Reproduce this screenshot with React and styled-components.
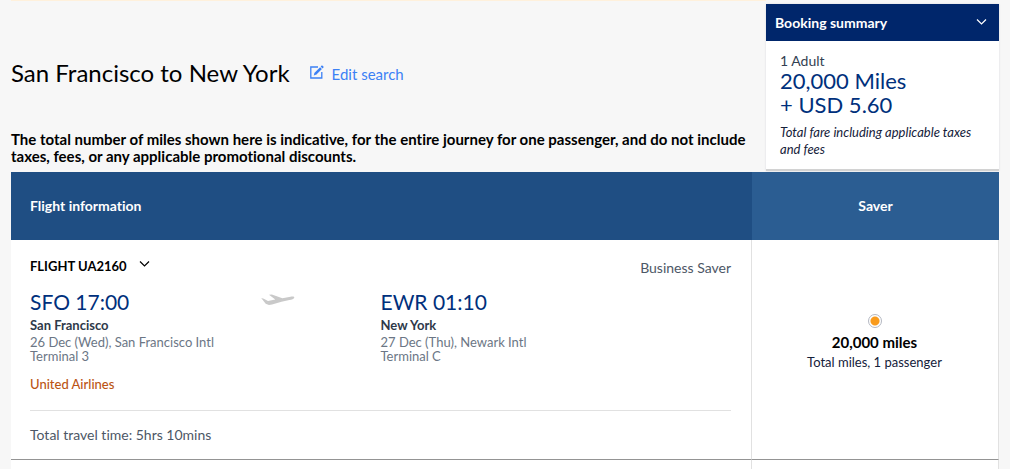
import React from "react";
import styled, { createGlobalStyle } from "styled-components";

const sans = `Lato, "Open Sans", "Liberation Sans", sans-serif`;
const display = `Lato, "Open Sans", sans-serif`;

const GlobalStyle = createGlobalStyle`
  *, *::before, *::after { box-sizing: border-box; }
  body {
    margin: 0;
    background: #f7f7f7;
    color: #000a1f;
    font-family: ${sans};
    font-size: 14px;
    font-variant-ligatures: none;
  }
  h1, h2, p { margin: 0; }
  button { border: 0; background: none; padding: 0; font: inherit; color: inherit; cursor: pointer; }
`;

const Page = styled.main`
  padding: 0 11px;
`;

const Intro = styled.header`
  display: grid;
  grid-template-columns: minmax(0, 1fr) 233px;
  align-items: start;
  min-height: 172px;
`;

const IntroText = styled.div`
  border-top: 1px solid #fff1dc;
`;

const TitleRow = styled.div`
  display: flex;
  align-items: center;
  gap: 20px;
  padding-top: 55px;
`;

const Title = styled.h1`
  font-family: ${display};
  font-size: 24px;
  font-weight: 400;
  line-height: 34px;
  color: #000;
`;

const EditLink = styled.a`
  display: flex;
  align-items: center;
  gap: 8px;
  font-size: 15px;
  line-height: 20px;
  padding-top: 2px;
  color: #3c81f5;
  text-decoration: none;

  svg { margin-bottom: 4px; }
`;

const Notice = styled.p`
  padding-top: 41px;
  font-size: 15px;
  font-weight: 700;
  line-height: 17px;
  color: #000;
`;

const Summary = styled.aside`
  margin-top: 4px;
  background: #fff;
  border-bottom: 2px solid #d2d2d2;
  box-shadow: 0 0 2px rgba(0, 20, 60, 0.12);
`;

const SummaryToggle = styled.button`
  display: flex;
  align-items: center;
  justify-content: space-between;
  width: 100%;
  height: 37px;
  && { padding: 0 12px 1px 9px; }
  && { background: #00266b; color: #fff; }
  && { font-size: 14px; font-weight: 700; }
`;

const SummaryBody = styled.div`
  padding: 11px 14px;
`;

const Travellers = styled.p`
  font-size: 14px;
  line-height: 17px;
  color: #333f52;
`;

const Price = styled.p`
  font-family: ${display};
  font-size: 22px;
  font-weight: 400;
  line-height: 24px;
  color: #00307c;
`;

const FareNote = styled.p`
  padding-top: 7px;
  font-size: 13px;
  font-style: italic;
  line-height: 17px;
  color: #14213a;
`;

const FareTable = styled.table`
  width: 100%;
  table-layout: fixed;
  border-collapse: separate;
  border-spacing: 0;
  background: #fff;
`;

const HeadCell = styled.th`
  width: ${({ $fare }) => ($fare ? "25%" : "75%")};
  height: 68px;
  padding: 0 19px 2px;
  background: ${({ $fare }) => ($fare ? "#2b5d92" : "#1f4e83")};
  color: #fff;
  font-size: 14px;
  font-weight: 700;
  text-align: ${({ $fare }) => ($fare ? "center" : "left")};
`;

const Cell = styled.td`
  padding: 0 20px 0 19px;
  border-right: 1px solid #e1e1e1;
  border-bottom: 1px solid #949494;
  vertical-align: top;
`;

const FareCell = styled(Cell)`
  text-align: center;
  vertical-align: middle;
`;

const NextCell = styled.td`
  height: 9px;
  padding: 0;
  border-right: 1px solid #e1e1e1;
`;

const FlightTop = styled.div`
  display: flex;
  justify-content: space-between;
  padding-top: 16px;
`;

const FlightToggle = styled.button`
  display: flex;
  align-items: center;
  gap: 12px;
  height: 20px;
  && { font-size: 13px; font-weight: 700; color: #000; }

  svg { margin-bottom: 4px; }
`;

const Cabin = styled.span`
  padding-top: 2px;
  font-size: 14px;
  line-height: 20px;
  color: #4d5766;
`;

const Route = styled.div`
  display: grid;
  grid-template-columns: 1fr 1fr;
  padding-top: 10px;
`;

const Departure = styled.div`
  display: grid;
  grid-template-columns: 33fr 17fr;
  align-items: start;
`;

const PlaneIcon = styled.svg`
  margin-top: 6px;
`;

const Time = styled.p`
  font-family: ${display};
  font-size: 21px;
  font-weight: 400;
  line-height: 27px;
  color: #00307c;
`;

const City = styled.p`
  padding-top: 1px;
  font-size: 13px;
  font-weight: 700;
  line-height: 18px;
  color: #2e3949;
`;

const Place = styled.p`
  padding-top: 1px;
  font-size: 13px;
  line-height: 14px;
  color: #6b7685;
`;

const Carrier = styled.p`
  padding: 12px 0 17px;
  font-size: 13px;
  font-weight: 500;
  line-height: 18px;
  color: #bb5413;
  border-bottom: 1px solid #e1e1e1;
`;

const Duration = styled.p`
  padding: 14px 0 15px;
  font-size: 14px;
  line-height: 19px;
  color: #4d5766;
`;

const FareOption = styled.label`
  display: flex;
  flex-direction: column;
  align-items: center;
  padding-bottom: 14px;
`;

const Radio = styled.input`
  appearance: none;
  width: 14px;
  height: 14px;
  margin: 0;
  border: 1px solid #b4b8c2;
  border-radius: 50%;
  background: #fff;
  &:checked { background: radial-gradient(circle, #f99b1c 0 4px, #fff 5px); }
`;

const Miles = styled.strong`
  padding-top: 4px;
  font-size: 15px;
  line-height: 20px;
  color: #000;
`;

const MilesNote = styled.span`
  font-size: 13px;
  line-height: 20px;
  color: #14213a;
`;

const Chevron = () => (
  <svg width="11" height="8" viewBox="0 0 11 8" fill="none" stroke="currentColor" strokeWidth="1.2" aria-hidden="true">
    <path d="M1 1.5 5.5 6 10 1.5" />
  </svg>
);

const EditIcon = () => (
  <svg width="14" height="14" viewBox="0 0 14 14" fill="none" stroke="currentColor" aria-hidden="true">
    <path d="M8 2H.8v11h11V7" strokeWidth="1.3" />
    <path d="m5 9.2 6-6" strokeWidth="2.6" />
    <path d="m11.6 2.5 1.3-1.3" strokeWidth="2.6" />
    <path d="m3.7 10.5.7-2.2 1.5 1.5z" fill="currentColor" stroke="none" />
  </svg>
);

const Plane = () => (
  <PlaneIcon width="34" height="12" viewBox="0 0 34 12" fill="#c9c9c9" aria-hidden="true">
    <path d="M.2 4.1 2.8 4.7 7 7.1 14.3 5.6 8 .8 10.8.5 21.4 4.2 29.5 2.7C32 2.3 33.5 2.6 33.3 3.7 33 5 30.7 5.7 28.4 6.1L20.5 7.7 11 10.5 8 10.9 4.7 9.8Z" />
  </PlaneIcon>
);

function Stop({ time, city, date, terminal }) {
  return (
    <div>
      <Time>{time}</Time>
      <City>{city}</City>
      <Place>{date}<br />{terminal}</Place>
    </div>
  );
}

export default function App() {
  return (
    <>
      <GlobalStyle />
      <Page>
        <Intro>
          <IntroText>
            <TitleRow>
              <Title>San Francisco to New York</Title>
              <EditLink href="#edit"><EditIcon />Edit search</EditLink>
            </TitleRow>
            <Notice>
              The total number of miles shown here is indicative, for the entire journey for one passenger, and do not include taxes, fees, or any applicable promotional discounts.
            </Notice>
          </IntroText>
          <Summary>
            <SummaryToggle type="button">Booking summary<Chevron /></SummaryToggle>
            <SummaryBody>
              <Travellers>1 Adult</Travellers>
              <Price>20,000 Miles<br />+ USD 5.60</Price>
              <FareNote>Total fare including applicable taxes and fees</FareNote>
            </SummaryBody>
          </Summary>
        </Intro>
        <FareTable>
          <thead>
            <tr>
              <HeadCell scope="col">Flight information</HeadCell>
              <HeadCell scope="col" $fare>Saver</HeadCell>
            </tr>
          </thead>
          <tbody>
            <tr>
              <Cell>
                <FlightTop>
                  <FlightToggle type="button">FLIGHT UA2160<Chevron /></FlightToggle>
                  <Cabin>Business Saver</Cabin>
                </FlightTop>
                <Route>
                  <Departure>
                    <Stop time="SFO 17:00" city="San Francisco" date="26 Dec (Wed), San Francisco Intl" terminal="Terminal 3" />
                    <Plane />
                  </Departure>
                  <Stop time="EWR 01:10" city="New York" date="27 Dec (Thu), Newark Intl" terminal="Terminal C" />
                </Route>
                <Carrier>United Airlines</Carrier>
                <Duration>Total travel time: 5hrs 10mins</Duration>
              </Cell>
              <FareCell>
                <FareOption>
                  <Radio type="radio" name="fare" defaultChecked />
                  <Miles>20,000 miles</Miles>
                  <MilesNote>Total miles, 1 passenger</MilesNote>
                </FareOption>
              </FareCell>
            </tr>
            <tr>
              <NextCell />
              <NextCell />
            </tr>
          </tbody>
        </FareTable>
      </Page>
    </>
  );
}
